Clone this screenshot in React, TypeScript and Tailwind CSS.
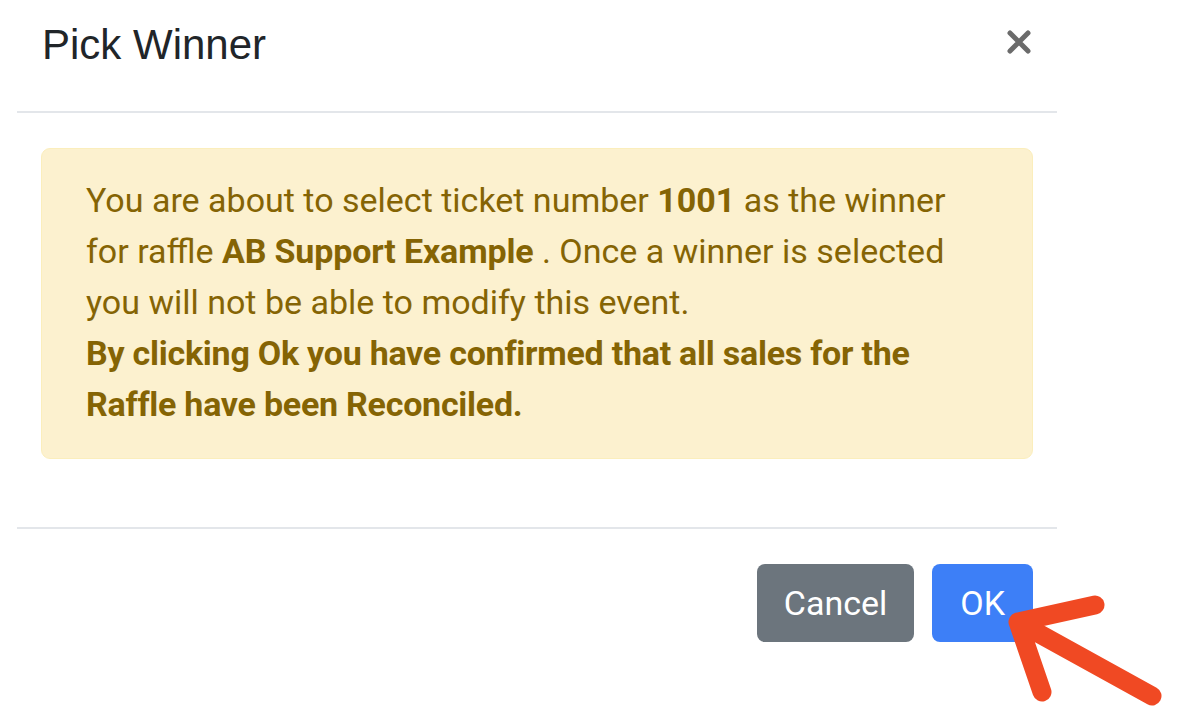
export default function App() {
  return (
    <div className="relative w-[1179px] h-[724px] bg-white overflow-hidden font-['Roboto',sans-serif]">
      <div className="ml-[17px] w-[1040px]">
        {/* header */}
        <div className="flex items-start justify-between pl-[25px] pr-[26px] pt-[20px] pb-[41px] border-b-2 border-[#e3e6ea]">
          <h5 className="font-['Liberation_Sans',Arial,sans-serif] text-[42px] leading-[50px] text-[#212529]">Pick Winner</h5>
          <button className="mt-[10px] w-[24px] h-[24px] flex items-center justify-center">
            <svg width="24" height="24" viewBox="0 0 24 24">
              <path d="M3 3 L21 21 M21 3 L3 21" stroke="#6b6b6b" strokeWidth="5" strokeLinecap="round" />
            </svg>
          </button>
        </div>

        {/* body */}
        <div className="px-[24px] pt-[35px] pb-[68px] border-b-2 border-[#e3e6ea]">
          <div className="rounded-[9px] border border-[#fbeebc] bg-[#fcf1cf] pl-[44px] pr-[30px] pt-[26px] pb-[28px] text-[34px] leading-[51px] text-[#856404]">
            You are about to select ticket number <b className="font-bold">1001</b> as the winner
            <br />
            for raffle <b className="font-bold tracking-[-0.15px]">AB Support Example</b> . Once a winner is selected
            <br />
            you will not be able to modify this event.
            <br />
            <b className="font-bold tracking-[-0.25px]">
              By clicking Ok you have confirmed that all sales for the
              <br />
              Raffle have been Reconciled.
            </b>
          </div>
        </div>

        {/* footer */}
        <div className="flex justify-end gap-[18px] pt-[35px] pr-[24px]">
          <button className="h-[78px] px-[27px] rounded-[8px] bg-[#6c757d] text-white text-[34px]">Cancel</button>
          <button className="h-[78px] px-[28px] rounded-[8px] bg-[#3d7ff7] text-white text-[34px]">OK</button>
        </div>
      </div>

      {/* annotation arrow */}
      <svg className="absolute left-0 top-0 pointer-events-none" width="1179" height="724">
        <path
          d="M1095 605 L1018 622 L1042 692 M1018 622 L1152 696"
          stroke="#f04923"
          strokeWidth="19"
          strokeLinecap="round"
          strokeLinejoin="round"
          fill="none"
        />
      </svg>
    </div>
  );
}
